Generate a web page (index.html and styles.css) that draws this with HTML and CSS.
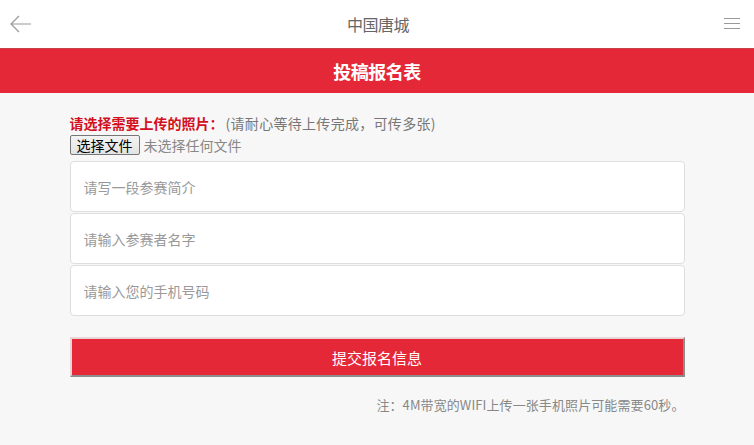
FILE: index.html
```html
<!DOCTYPE html>
<html lang="zh-CN">
<head>
<meta charset="utf-8">
<title>中国唐城</title>
<link rel="stylesheet" href="styles.css">
</head>
<body>
<header class="topbar">
  <a class="back" href="#" aria-label="返回">
    <svg width="24" height="20" viewBox="0 0 24 20"><path d="M2 10H22M10 2L2 10L10 18" fill="none" stroke="#9a9a9a" stroke-width="1.2"/></svg>
  </a>
  <div class="site-title">中国唐城</div>
  <a class="menu" href="#" aria-label="菜单">
    <svg width="18" height="14" viewBox="0 0 18 14"><path d="M1 1.5H17M1 6.5H17M1 11.5H17" fill="none" stroke="#9a9a9a" stroke-width="1.2"/></svg>
  </a>
</header>
<div class="banner">投稿报名表</div>
<main class="form">
  <div class="upload-label"><strong>请选择需要上传的照片：</strong><span class="hint">(请耐心等待上传完成，可传多张)</span></div>
  <div class="file-row">
    <label class="file-btn">选择文件<input type="file" multiple class="file-input"></label>
    <span class="file-status">未选择任何文件</span>
  </div>
  <div class="fields">
    <input class="field" type="text" placeholder="请写一段参赛简介">
    <input class="field" type="text" placeholder="请输入参赛者名字">
    <input class="field" type="text" placeholder="请输入您的手机号码">
  </div>
  <button class="submit" type="button">提交报名信息</button>
  <p class="note">注：4M带宽的WIFI上传一张手机照片可能需要60秒。</p>
</main>
</body>
</html>
```

FILE: styles.css
```css
* { box-sizing: border-box; }
html, body { margin: 0; padding: 0; }
body {
  background: #f7f7f7;
  font-family: "Noto Sans CJK SC", "Noto Sans", "Liberation Sans", sans-serif;
  color: #666;
}
.topbar {
  height: 48px;
  background: #fff;
  display: flex;
  align-items: center;
  justify-content: space-between;
  padding: 0 13px 0 9px;
}
.back, .menu { display: flex; align-items: center; }
.site-title {
  font-size: 16px;
  color: #666;
  letter-spacing: -0.5px;
}
.banner {
  height: 45px;
  background: #e52837;
  border-top: 1px solid #c9414b;
  color: #fff;
  font-size: 18px;
  font-weight: bold;
  display: flex;
  align-items: center;
  justify-content: center;
  letter-spacing: -0.5px;
}
.form {
  width: 615px;
  margin: 0 auto;
  padding-top: 20px;
}
.upload-label {
  font-size: 14px;
  line-height: 20px;
}
.upload-label strong { color: #d40f1e; font-weight: bold; }
.hint { color: #777; letter-spacing: 0.3px; margin-left: 2px; }
.file-row {
  display: flex;
  align-items: center;
  height: 22px;
  margin-top: 1px;
}
.file-btn {
  font-size: 14px;
  line-height: 18px;
  color: #000;
  background: linear-gradient(#f3f3f3, #e3e3e3);
  border: 1px solid #767676;
  border-radius: 2px;
  padding: 0 6px;
  height: 20px;
  display: flex;
  align-items: center;
}
.file-input { display: none; }
.file-status {
  font-size: 14px;
  color: #888;
  margin-left: 4px;
}
.fields {
  display: flex;
  flex-direction: column;
  margin-top: 5px;
}
.field {
  height: 51px;
  border: 1px solid #dedede;
  border-radius: 4px;
  background: #fff;
  padding: 0 13px;
  font-family: inherit;
  font-size: 14px;
  color: #333;
  outline: none;
}
.field + .field { margin-top: 1px; }
.field::placeholder { color: #999; }
.submit {
  display: block;
  width: 615px;
  height: 40px;
  margin-top: 21px;
  background: #e52837;
  border-style: solid;
  border-width: 2px;
  border-color: #e9d5d7 #8c8c8c #8c8c8c #e9d5d7;
  color: #fff;
  font-family: inherit;
  font-size: 15px;
  padding: 0;
}
.note {
  margin: 18px 0 0;
  text-align: right;
  font-size: 13px;
  line-height: 20px;
  color: #888;
  letter-spacing: 0.1px;
}
```
